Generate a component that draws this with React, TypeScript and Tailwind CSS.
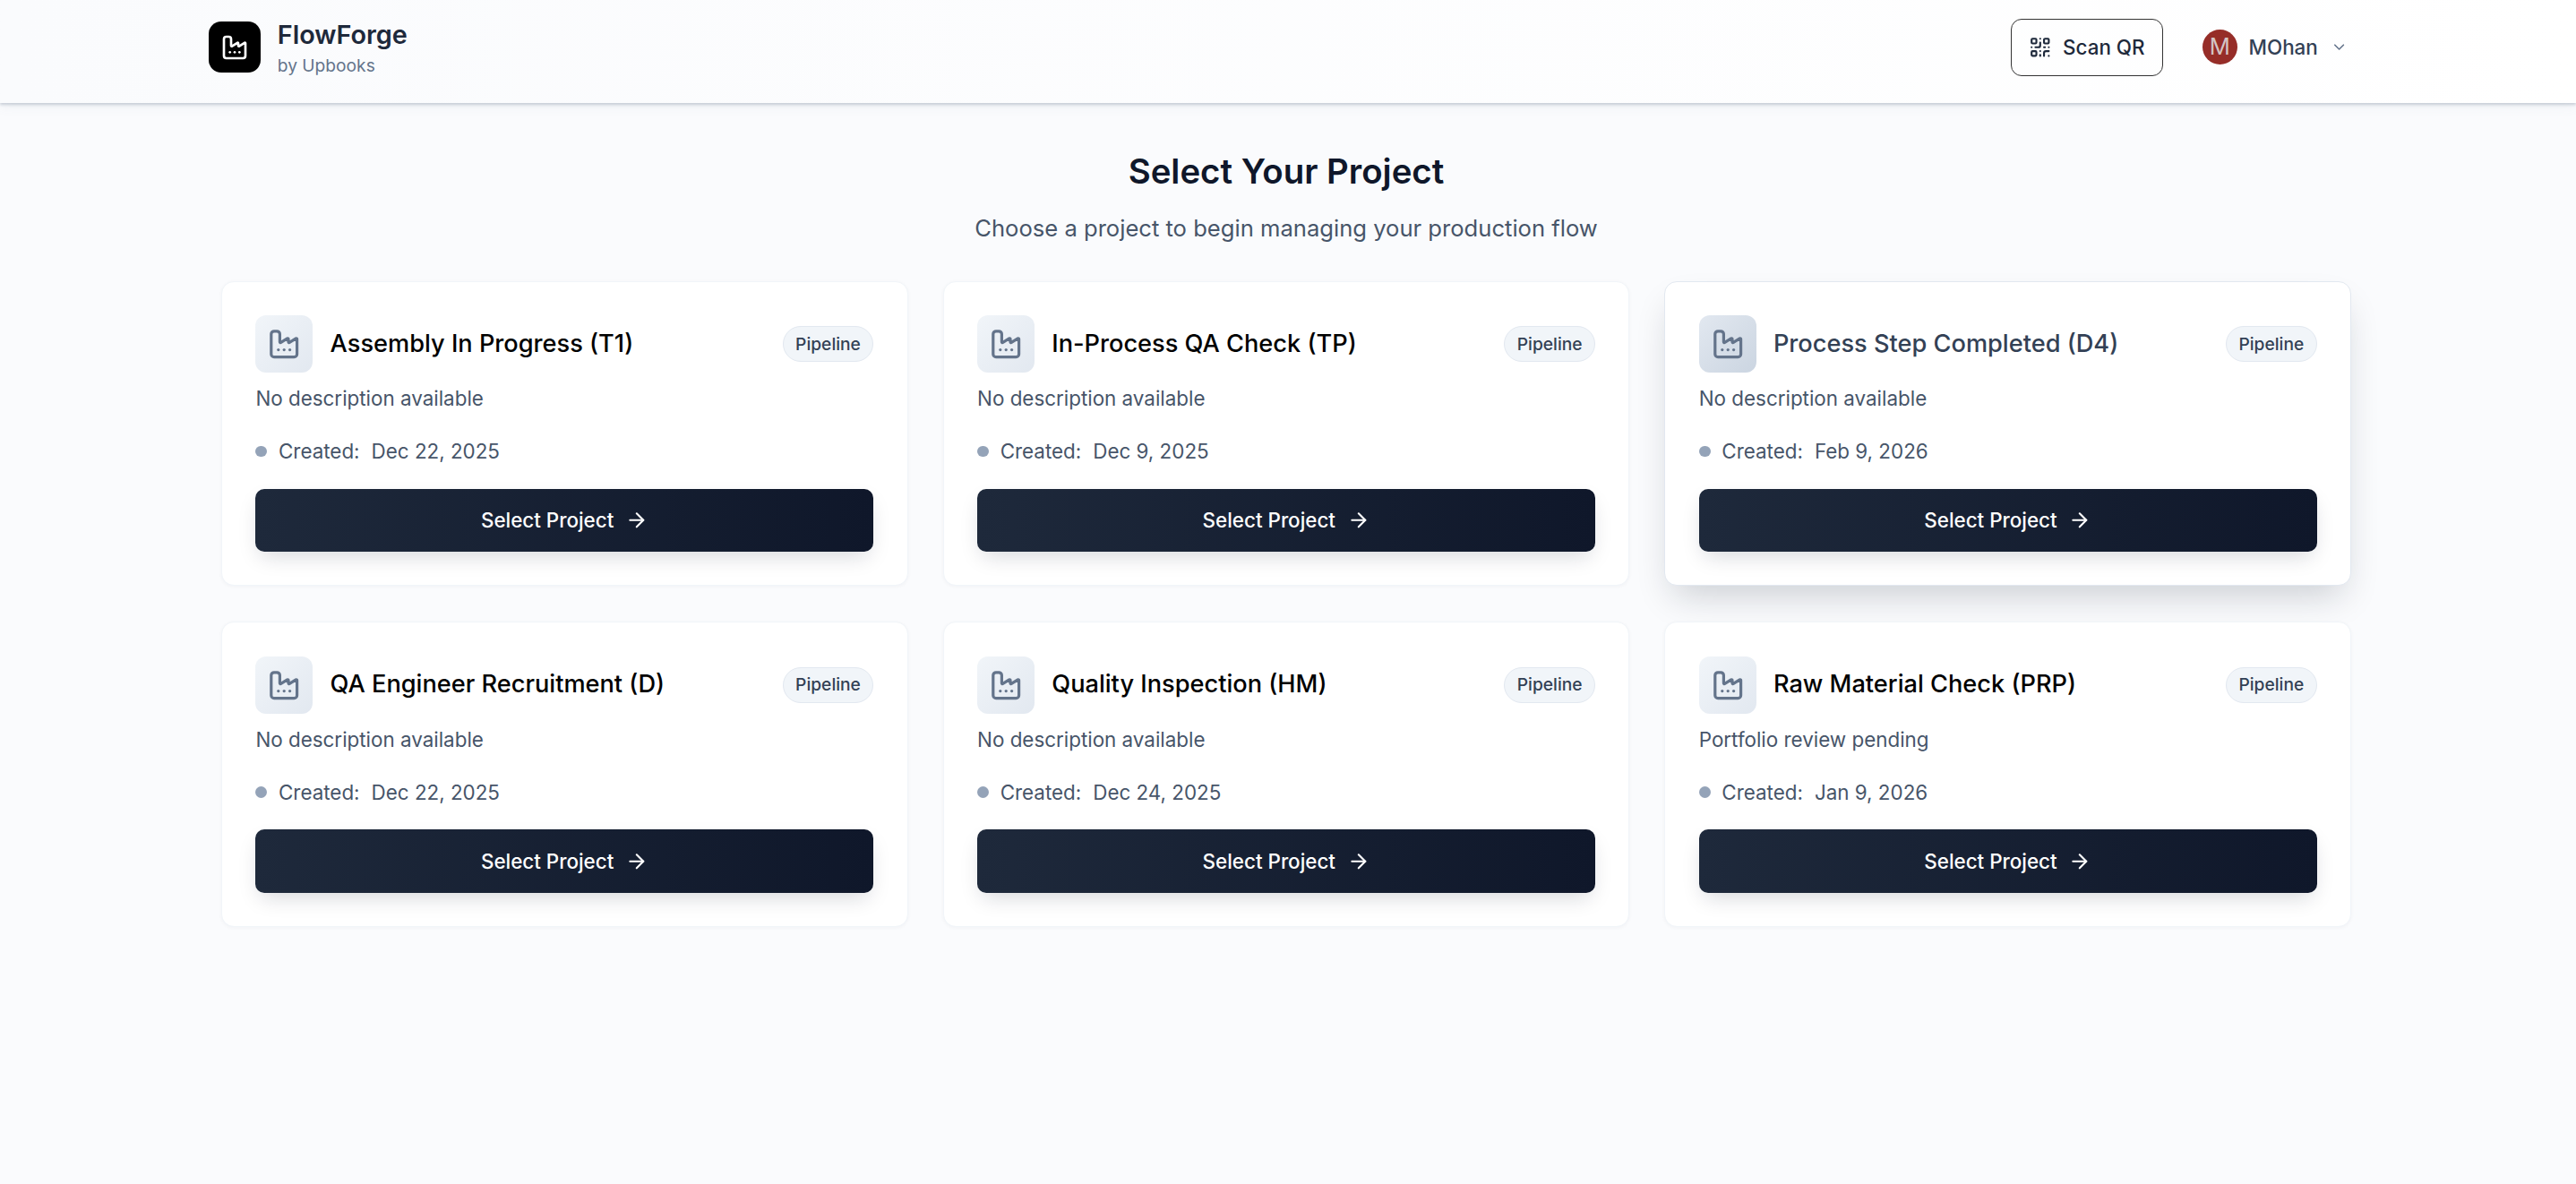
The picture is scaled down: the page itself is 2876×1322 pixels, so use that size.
import { ArrowRight, ChevronDown, Factory, QrCode } from "lucide-react";

const PROJECTS = [
  { name: "Assembly In Progress (T1)", description: "No description available", created: "Dec 22, 2025" },
  { name: "In-Process QA Check (TP)", description: "No description available", created: "Dec 9, 2025" },
  { name: "Process Step Completed (D4)", description: "No description available", created: "Feb 9, 2026", hovered: true },
  { name: "QA Engineer Recruitment (D)", description: "No description available", created: "Dec 22, 2025" },
  { name: "Quality Inspection (HM)", description: "No description available", created: "Dec 24, 2025" },
  { name: "Raw Material Check (PRP)", description: "Portfolio review pending", created: "Jan 9, 2026" },
];

function Header() {
  return (
    <header className="h-[115px] bg-gradient-to-r from-[#fafbfd] to-white shadow-[0_2px_3px_rgba(100,116,139,0.3),0_4px_12px_rgba(100,116,139,0.08)] pl-[233px] pr-[255px] pb-[10px] flex items-center justify-between">
      <div className="flex items-center gap-[19.2px]">
        <div className="w-[57.6px] h-[57.6px] rounded-[14px] bg-black flex items-center justify-center">
          <Factory className="w-8 h-8 text-white" strokeWidth={2} />
        </div>
        <div className="flex flex-col pt-[3px] gap-[1.5px]">
          <span className="text-[28.8px] leading-[36px] font-semibold text-[#1e293b]">FlowForge</span>
          <span className="text-[19.2px] leading-[28px] text-[#64748b]">by Upbooks</span>
        </div>
      </div>
      <div className="flex items-center gap-[44.5px]">
        <button className="h-[64px] w-[170px] rounded-xl border border-[#333] flex items-center justify-center gap-[12.8px] text-[22.4px] font-medium text-[#1e293b]">
          <QrCode className="w-[25.6px] h-[25.6px]" />
          Scan QR
        </button>
        <div className="flex items-center">
          <div className="w-[38.4px] h-[38.4px] rounded-full bg-[#962d28] flex items-center justify-center text-[25.6px] text-[#d4c4c4]">M</div>
          <span className="ml-[13px] text-[22.4px] font-medium text-[#334155]">MOhan</span>
          <ChevronDown className="ml-[14px] w-[19.2px] h-[19.2px] text-[#64748b]" />
        </div>
      </div>
    </header>
  );
}

function ProjectCard({ project }: { project: (typeof PROJECTS)[number] }) {
  return (
    <div
      className={
        project.hovered
          ? "bg-white rounded-[14px] border border-[#e2e8f0] p-[37.4px] shadow-[0_20px_40px_-10px_rgba(15,23,42,0.2)]"
          : "bg-white rounded-[14px] border border-[#f1f5f9] p-[37.4px] shadow-[0_1px_4px_rgba(15,23,42,0.04)]"
      }
    >
      <div className="flex items-center justify-between">
        <div className="flex items-center gap-[19.2px]">
          <div
            className={
              project.hovered
                ? "w-16 h-16 rounded-xl bg-gradient-to-br from-[#e2e8f0] to-[#cbd5e1] flex items-center justify-center"
                : "w-16 h-16 rounded-xl bg-gradient-to-br from-[#f1f5f9] to-[#e2e8f0] flex items-center justify-center"
            }
          >
            <Factory className="w-[38.4px] h-[38.4px] text-[#64748b]" strokeWidth={2} />
          </div>
          <h3 className={project.hovered ? "text-[27.2px] font-medium text-[#334155]" : "text-[27.2px] font-medium text-black"}>
            {project.name}
          </h3>
        </div>
        <span className="h-10 px-[13.4px] rounded-full bg-[#f1f5f9] border border-[#e2e8f0] flex items-center text-[19.2px] font-medium text-[#334155]">
          Pipeline
        </span>
      </div>
      <p className="mt-[12.8px] text-[22.4px] leading-[32px] text-[#475569]">{project.description}</p>
      <div className="mt-[27.2px] flex items-center text-[22.4px] leading-[32px] text-[#475569]">
        <span className="w-[12.8px] h-[12.8px] rounded-full bg-[#94a3b8] mr-[12.8px]" />
        <span>Created:</span>
        <span className="ml-[13px]">{project.created}</span>
      </div>
      <button className="mt-[25.6px] w-full h-[70.4px] rounded-[10px] bg-gradient-to-r from-[#1e293b] to-[#0f172a] shadow-[0_10px_24px_-6px_rgba(15,23,42,0.18)] flex items-center justify-center gap-[12.8px] text-[22.4px] font-medium text-white">
        Select Project
        <ArrowRight className="w-[25.6px] h-[25.6px]" />
      </button>
    </div>
  );
}

export default function App() {
  return (
    <div className="min-h-screen bg-[#fafbfd] font-['Inter',sans-serif]">
      <Header />
      <main className="pl-[247px] pr-[251px] pt-[50px]">
        <div className="text-center">
          <h1 className="text-[38.4px] leading-[52px] font-semibold text-[#0f172a]">Select Your Project</h1>
          <p className="mt-[18px] text-[25.6px] leading-[40px] text-[#475569]">Choose a project to begin managing your production flow</p>
        </div>
        <div className="mt-[38.6px] grid grid-cols-3 gap-x-[39px] gap-y-[40px]">
          {PROJECTS.map((p) => (
            <ProjectCard key={p.name} project={p} />
          ))}
        </div>
      </main>
    </div>
  );
}
